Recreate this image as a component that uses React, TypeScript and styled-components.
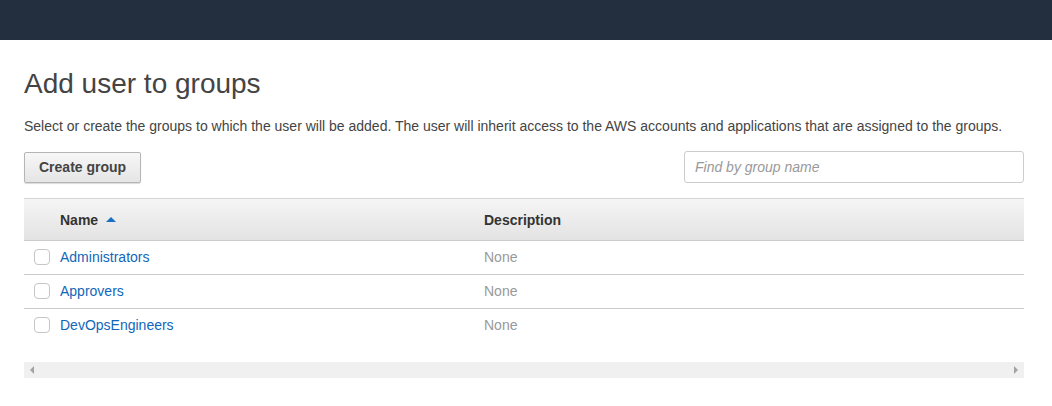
import styled, { createGlobalStyle } from "styled-components"

const GlobalStyle = createGlobalStyle`
  body {
    margin: 0;
    background: #fff;
    font-family: "Liberation Sans", Arial, sans-serif;
    color: #444;
  }
`

const TopBar = styled.div`
  height: 40px;
  background-color: #232f3e;
`

const Page = styled.div`
  padding: 24px 28px 0 24px;
`

const Title = styled.h1`
  margin: 0;
  padding-top: 2px;
  font-size: 28px;
  font-weight: 400;
  line-height: 36px;
  color: #444;
`

const Intro = styled.p`
  margin: 14px 0 0;
  font-size: 14px;
  line-height: 20px;
  color: #444;
`

const Toolbar = styled.div`
  display: flex;
  justify-content: space-between;
  align-items: center;
  margin-top: 15px;
`

const Button = styled.button`
  height: 31px;
  padding: 0 14px;
  font-family: inherit;
  font-size: 14px;
  font-weight: 700;
  color: #444;
  background: linear-gradient(#f7f7f7, #e5e5e5);
  border: 1px solid #b5b5b5;
  border-radius: 2px;
  box-shadow: 0 1px 1px rgba(0, 0, 0, 0.15);
`

const Search = styled.input`
  box-sizing: border-box;
  width: 340px;
  height: 32px;
  padding: 0 10px;
  font-family: inherit;
  font-size: 14px;
  border: 1px solid #ccc;
  border-radius: 3px;
  outline: none;

  &::placeholder {
    color: #999;
    font-style: italic;
  }
`

const Table = styled.div`
  margin-top: 15px;
`

const Row = styled.div<{ $header?: boolean; $last?: boolean }>`
  display: grid;
  grid-template-columns: 36px 424px 1fr;
  align-items: center;
  box-sizing: border-box;
  height: ${({ $header }) => ($header ? "43px" : "34px")};
  padding-bottom: ${({ $header }) => ($header ? "0" : "2px")};
  font-size: 14px;
  background: ${({ $header }) =>
    $header ? "linear-gradient(#f5f5f5, #e3e3e3)" : "transparent"};
  border-top: ${({ $header }) => ($header ? "1px solid #d4d4d4" : "none")};
  border-bottom: ${({ $last }) => ($last ? "1px solid transparent" : "1px solid #ccc")};
`

const HeadCell = styled.div`
  display: flex;
  align-items: center;
  gap: 8px;
  font-weight: 700;
  color: #333;
`

const SortCaret = styled.span`
  width: 0;
  height: 0;
  border-left: 5px solid transparent;
  border-right: 5px solid transparent;
  border-bottom: 5px solid #1a6fc4;
`

const CheckCell = styled.div`
  display: flex;
  padding-left: 10px;
`

const Checkbox = styled.span`
  box-sizing: border-box;
  width: 16px;
  height: 16px;
  border: 1px solid #c6c6c6;
  border-radius: 4px;
  background: #fff;
`

const NameLink = styled.a`
  color: #1166bb;
  text-decoration: none;
  cursor: pointer;
`

const Muted = styled.span`
  color: #999;
`

const Scrollbar = styled.div`
  display: flex;
  justify-content: space-between;
  align-items: center;
  height: 16px;
  margin-top: 19px;
  padding: 0 6px;
  background: #f0f0f0;
`

const Arrow = styled.span<{ $dir: "left" | "right" }>`
  width: 0;
  height: 0;
  border-top: 4px solid transparent;
  border-bottom: 4px solid transparent;
  ${({ $dir }) =>
    $dir === "left" ? "border-right: 4px solid #a3a3a3;" : "border-left: 4px solid #a3a3a3;"}
`

const groups = ["Administrators", "Approvers", "DevOpsEngineers"]

const App = () => {
  return (
    <>
      <GlobalStyle />
      <TopBar />
      <Page>
        <Title>Add user to groups</Title>
        <Intro>
          Select or create the groups to which the user will be added. The user will inherit access to
          the AWS accounts and applications that are assigned to the groups.
        </Intro>
        <Toolbar>
          <Button>Create group</Button>
          <Search placeholder="Find by group name" />
        </Toolbar>
        <Table>
          <Row $header>
            <div />
            <HeadCell>
              Name <SortCaret />
            </HeadCell>
            <HeadCell>Description</HeadCell>
          </Row>
          {groups.map((name, i) => (
            <Row key={name} $last={i === groups.length - 1}>
              <CheckCell>
                <Checkbox />
              </CheckCell>
              <NameLink>{name}</NameLink>
              <Muted>None</Muted>
            </Row>
          ))}
        </Table>
        <Scrollbar>
          <Arrow $dir="left" />
          <Arrow $dir="right" />
        </Scrollbar>
      </Page>
    </>
  )
}

export default App
